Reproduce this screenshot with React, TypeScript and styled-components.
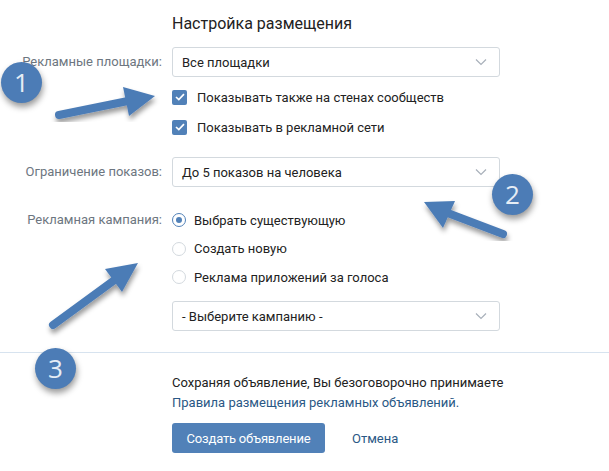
import styled, { createGlobalStyle } from "styled-components"

const GlobalStyle = createGlobalStyle`
  html, body {
    margin: 0;
    padding: 0;
    background: #fff;
  }
  body {
    font-family: Roboto, "Liberation Sans", sans-serif;
    font-size: 13px;
    color: #222;
  }
`

const Chevron = () => (
  <ChevronIcon viewBox="0 0 12 8" fill="none">
    <path d="M1 1.5 L6 6.5 L11 1.5" stroke="#a8b0ba" strokeWidth="1.2" />
  </ChevronIcon>
)

const Select = ({ value }: { value: string }) => (
  <SelectBox>
    {value}
    <Chevron />
  </SelectBox>
)

const Checkbox = ({ label }: { label: string }) => (
  <CheckRow>
    <CheckMark>
      <svg width="10" height="8" viewBox="0 0 10 8" fill="none">
        <path d="M1 4 L3.8 6.6 L9 1.2" stroke="#fff" strokeWidth="1.7" />
      </svg>
    </CheckMark>
    {label}
  </CheckRow>
)

const Radio = ({ label, checked }: { label: string; checked?: boolean }) => (
  <RadioRow>
    <RadioMark $checked={checked} />
    {label}
  </RadioRow>
)

const arrows = [
  "M59 115 L128 101",
  "M503 234 L445 212",
  "M53 325 L120 276",
]

const arrowHeads = [
  "M123 87 L155 96 L129 116 Z",
  "M424 202 L455 201 L443 228 Z",
  "M138 263 L105 269 L122 292 Z",
]

const App = () => {
  return (
    <Page>
      <GlobalStyle />
      <Title>Настройка размещения</Title>

      <Row>
        <Label>Рекламные площадки:</Label>
        <Select value="Все площадки" />
      </Row>
      <Options>
        <Checkbox label="Показывать также на стенах сообществ" />
        <Checkbox label="Показывать в рекламной сети" />
      </Options>

      <LimitRow>
        <Label>Ограничение показов:</Label>
        <Select value="До 5 показов на человека" />
      </LimitRow>

      <CampaignRow>
        <Label>Рекламная кампания:</Label>
        <RadioGroup>
          <Radio label="Выбрать существующую" checked />
          <Radio label="Создать новую" />
          <Radio label="Реклама приложений за голоса" />
        </RadioGroup>
      </CampaignRow>
      <Row>
        <span />
        <Select value="- Выберите кампанию -" />
      </Row>

      <Divider />

      <Footer>
        <Agreement>
          Сохраняя объявление, Вы безоговорочно принимаете
          <RulesLink>Правила размещения рекламных объявлений.</RulesLink>
        </Agreement>
        <Actions>
          <PrimaryButton>Создать объявление</PrimaryButton>
          <CancelLink>Отмена</CancelLink>
        </Actions>
      </Footer>

      <ArrowLayer viewBox="0 0 609 471">
        <defs>
          <filter id="arrowShadow" x="-20%" y="-20%" width="140%" height="140%">
            <feDropShadow dx="1" dy="4" stdDeviation="2.5" floodColor="#000" floodOpacity="0.4" />
          </filter>
        </defs>
        {arrows.map((d, i) => (
          <g key={d} filter="url(#arrowShadow)">
            <path d={d} stroke="#4c7cb6" strokeWidth="8" strokeLinecap="round" />
            <path d={arrowHeads[i]} fill="#4c7cb6" />
          </g>
        ))}
      </ArrowLayer>

      <Badge $x={1} $y={62}>1</Badge>
      <Badge $x={492} $y={174}>2</Badge>
      <Badge $x={35} $y={348}>3</Badge>
    </Page>
  )
}

const Page = styled.div`
  position: relative;
  width: 609px;
  height: 471px;
  overflow: hidden;
  padding-top: 14px;
  box-sizing: border-box;
`

const Title = styled.h2`
  margin: 0 0 13px 172px;
  font-weight: 400;
  font-size: 16px;
  line-height: 20px;
  color: #222;
`

const Row = styled.div`
  display: grid;
  grid-template-columns: 162px 328px;
  column-gap: 10px;
  align-items: center;
`

const LimitRow = styled(Row)`
  margin-top: 20px;
`

const CampaignRow = styled(Row)`
  margin-top: 23px;
  margin-bottom: 14px;
  align-items: start;
`

const Label = styled.div`
  text-align: right;
  color: #6d7680;
  line-height: 20px;
`

const SelectBox = styled.div`
  display: flex;
  align-items: center;
  justify-content: space-between;
  box-sizing: border-box;
  height: 30px;
  padding: 0 12px 0 9px;
  border: 1px solid #d3d9de;
  border-radius: 3px;
  color: #222;
`

const ChevronIcon = styled.svg`
  width: 12px;
  height: 8px;
`

const Options = styled.div`
  display: flex;
  flex-direction: column;
  gap: 10px;
  margin: 10px 0 0 172px;
`

const CheckRow = styled.div`
  display: flex;
  align-items: center;
  gap: 10px;
  height: 20px;
`

const CheckMark = styled.span`
  display: flex;
  align-items: center;
  justify-content: center;
  width: 15px;
  height: 15px;
  border-radius: 2px;
  background: #5181b8;
`

const RadioGroup = styled.div`
  display: flex;
  flex-direction: column;
  gap: 8.5px;
`

const RadioRow = styled.div`
  display: flex;
  align-items: center;
  gap: 8px;
  height: 20px;
`

const RadioMark = styled.span<{ $checked?: boolean }>`
  position: relative;
  width: 14px;
  height: 14px;
  box-sizing: border-box;
  border-radius: 50%;
  border: 1px solid ${(p) => (p.$checked ? "#5181b8" : "#d3d9de")};

  &::after {
    content: "";
    display: ${(p) => (p.$checked ? "block" : "none")};
    position: absolute;
    inset: 3px;
    border-radius: 50%;
    background: #5181b8;
  }
`

const Divider = styled.div`
  height: 1px;
  margin-top: 21px;
  background: #d7e3ef;
`

const Footer = styled.div`
  margin: 20px 0 0 172px;
`

const Agreement = styled.div`
  line-height: 20px;
  color: #222;
`

const RulesLink = styled.a`
  display: block;
  color: #2a5885;
`

const Actions = styled.div`
  display: flex;
  align-items: center;
  gap: 27px;
  margin-top: 10px;
`

const PrimaryButton = styled.button`
  width: 153px;
  height: 30px;
  padding: 0;
  border: 0;
  border-radius: 3px;
  background: #5181b8;
  color: #fff;
  font: inherit;
  letter-spacing: -0.2px;
`

const CancelLink = styled.a`
  color: #2a5885;
`

const ArrowLayer = styled.svg`
  position: absolute;
  left: 0;
  top: 0;
  width: 609px;
  height: 471px;
  pointer-events: none;
`

const Badge = styled.div<{ $x: number; $y: number }>`
  position: absolute;
  left: ${(p) => p.$x}px;
  top: ${(p) => p.$y}px;
  width: 41px;
  height: 41px;
  border-radius: 50%;
  background: #4c7cb6;
  box-shadow: 1px 4px 6px rgba(0, 0, 0, 0.4);
  color: #e6edf5;
  font-family: "Open Sans", sans-serif;
  font-size: 26px;
  line-height: 41px;
  text-align: center;
`

export default App
